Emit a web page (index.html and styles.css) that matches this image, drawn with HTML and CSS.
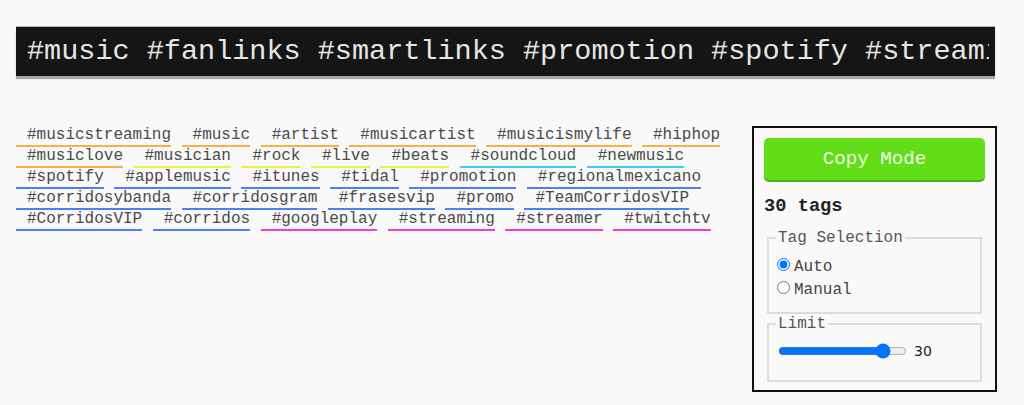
FILE: index.html
```html
<!DOCTYPE html>
<html lang="en">
<head>
<meta charset="utf-8">
<title>Hashtags</title>
<link rel="stylesheet" href="styles.css">
</head>
<body>
<div class="page">
  <div class="banner">
    <div class="banner-text">#music #fanlinks #smartlinks #promotion #spotify #streaming #musicstreaming</div>
  </div>
  <div class="main">
    <div class="tags">
      <span class="tag c-orange">#musicstreaming</span>
      <span class="tag c-orange">#music</span>
      <span class="tag c-orange">#artist</span>
      <span class="tag c-orange">#musicartist</span>
      <span class="tag c-orange">#musicismylife</span>
      <span class="tag c-orange">#hiphop</span>
      <span class="tag c-orange">#musiclove</span>
      <span class="tag c-yellow">#musician</span>
      <span class="tag c-yellow">#rock</span>
      <span class="tag c-yellow">#live</span>
      <span class="tag c-yellow">#beats</span>
      <span class="tag c-cyan">#soundcloud</span>
      <span class="tag c-cyan">#newmusic</span>
      <span class="tag c-blue">#spotify</span>
      <span class="tag c-blue">#applemusic</span>
      <span class="tag c-blue">#itunes</span>
      <span class="tag c-blue">#tidal</span>
      <span class="tag c-blue">#promotion</span>
      <span class="tag c-blue">#regionalmexicano</span>
      <span class="tag c-blue">#corridosybanda</span>
      <span class="tag c-blue">#corridosgram</span>
      <span class="tag c-blue">#frasesvip</span>
      <span class="tag c-blue">#promo</span>
      <span class="tag c-blue">#TeamCorridosVIP</span>
      <span class="tag c-blue">#CorridosVIP</span>
      <span class="tag c-blue">#corridos</span>
      <span class="tag c-pink">#googleplay</span>
      <span class="tag c-pink">#streaming</span>
      <span class="tag c-pink">#streamer</span>
      <span class="tag c-pink">#twitchtv</span>
    </div>
    <aside class="panel">
      <button class="copy" type="button">Copy Mode</button>
      <h3 class="count">30 tags</h3>
      <fieldset class="group group-sel">
        <legend>Tag Selection</legend>
        <label class="opt"><input type="radio" name="sel" checked>Auto</label>
        <label class="opt"><input type="radio" name="sel">Manual</label>
      </fieldset>
      <fieldset class="group group-limit">
        <legend>Limit</legend>
        <div class="limit-row">
          <input class="range" type="range" min="0" max="35" value="30">
          <output class="limit-val">30</output>
        </div>
      </fieldset>
    </aside>
  </div>
</div>
</body>
</html>
```
FILE: styles.css
```css
html, body {
  margin: 0;
  padding: 0;
  background: #f9f9f9;
}

body {
  font-family: "Liberation Mono", "Courier New", monospace;
  color: #444;
}

.page {
  padding: 27px 0 0 16px;
  width: 981px;
}

.banner {
  width: 979px;
  height: 49px;
  box-sizing: border-box;
  background: #151515;
  padding: 0 6px 0 11px;
  box-shadow: 0 -1px 0 #b8b8b8, 0 3px 1px #a8a8a8;
}

.banner-text {
  font-size: 28.5px;
  line-height: 49px;
  color: #e6e6e6;
  white-space: nowrap;
  overflow: hidden;
}

.main {
  display: flex;
  align-items: flex-start;
  margin-top: 50px;
}

.tags {
  width: 736px;
  display: flex;
  flex-wrap: wrap;
  align-content: flex-start;
  column-gap: 10.5px;
  row-gap: 0;
}

.tag {
  font-size: 16px;
  line-height: 19px;
  padding-left: 11px;
  border-bottom: 2px solid transparent;
  color: #4a4a4a;
  white-space: nowrap;
}

.c-orange { border-bottom-color: #fbb040; }
.c-yellow { border-bottom-color: #e6f23c; }
.c-cyan { border-bottom-color: #3ccdf5; }
.c-blue { border-bottom-color: #4d7ef5; }
.c-pink { border-bottom-color: #f53ccd; }

.panel {
  width: 245px;
  box-sizing: border-box;
  border: 2px solid #111;
  padding: 10px 10px 8px;
}

.copy {
  display: block;
  width: 100%;
  height: 42px;
  border: none;
  border-radius: 5px;
  background: #62dd17;
  box-shadow: 0 2px 0 #4bb411;
  color: #eefae6;
  font-family: "Liberation Mono", "Courier New", monospace;
  font-size: 19.2px;
  padding: 0;
  cursor: pointer;
}

.count {
  margin: 15px 0 12px;
  font-size: 18.72px;
  font-weight: bold;
  color: #222;
  line-height: normal;
}

.group {
  margin: 0 3px;
  border: 2px solid #dcdcdc;
  min-inline-size: 0;
}

.group legend {
  padding: 0 2px;
  font-size: 16px;
  line-height: normal;
  color: #555;
}

.group-sel {
  padding: 8px 7px 11px 7px;
}

.group-limit {
  margin-top: 1px;
  padding: 8px 7px 19px 7px;
}

.opt {
  display: block;
  font-size: 16px;
  line-height: 21px;
  color: #444;
}

.opt input {
  margin: 3px 4px 0 1px;
}

.limit-row {
  display: flex;
  align-items: center;
  gap: 5px;
  height: 20px;
}

.range {
  width: 129px;
  margin: 2px;
}

.limit-val {
  font-family: "DejaVu Sans", sans-serif;
  font-size: 14px;
  color: #222;
}
```
